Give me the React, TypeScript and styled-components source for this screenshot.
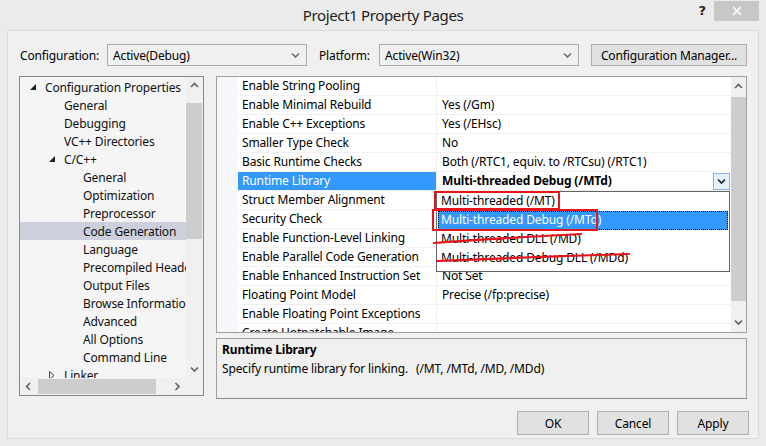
import React from "react";
import styled, { createGlobalStyle } from "styled-components";

const GlobalStyle = createGlobalStyle`
  html, body { margin: 0; padding: 0; background: #ebebeb; }
  * { box-sizing: border-box; }
  body { font-family: "Noto Sans", "Open Sans", sans-serif; font-size: 12px; letter-spacing: -0.14px; color: #000; }
`;

const Window = styled.div`
  position: relative;
  width: 766px;
  height: 446px;
  background: #ebebeb;
  display: flex;
  flex-direction: column;
  overflow: hidden;
`;

const TitleBar = styled.div`
  height: 30px;
  display: grid;
  grid-template-columns: 1fr auto 1fr;
  align-items: start;
`;

const Title = styled.div`
  grid-column: 2;
  font-size: 15px;
  line-height: 30px;
  color: #222;
  letter-spacing: -0.35px;
`;

const TitleControls = styled.div`
  grid-column: 3;
  display: flex;
  justify-content: flex-end;
  align-items: flex-start;
  padding-right: 7px;
  padding-top: 1px;
`;

const HelpGlyph = styled.span`
  font-family: "DejaVu Sans", sans-serif;
  font-weight: bold;
  font-size: 13px;
  line-height: 20px;
  color: #222;
  margin-right: 8px;
`;

const CloseButton = styled.div`
  width: 45px;
  height: 20px;
  background: #c7c7c7;
  display: flex;
  align-items: center;
  justify-content: center;
`;

const Panel = styled.div`
  margin: 0 7px 7px 7px;
  height: 409px;
  background: #f0f0f0;
  border: 1px solid #dcdcdc;
  padding: 13px 11px 0 11px;
  display: flex;
  flex-direction: column;
`;

const TopRow = styled.div`
  height: 22px;
  display: flex;
  align-items: center;
`;

const Label = styled.span<{ $w: number }>`
  flex: none;
  width: ${(p) => p.$w}px;
  padding-left: 1px;
`;

const Combo = styled.div`
  flex: none;
  width: 200px;
  height: 22px;
  border: 1px solid #acacac;
  background: #f0f0f0;
  display: flex;
  align-items: center;
  justify-content: space-between;
  padding: 0 6px 0 5px;
`;

const Spacer = styled.div<{ $w: number }>`
  flex: none;
  width: ${(p) => p.$w}px;
`;

const PushButton = styled.div<{ $w: number; $h: number }>`
  flex: none;
  width: ${(p) => p.$w}px;
  height: ${(p) => p.$h}px;
  border: 1px solid #adadad;
  background: #e1e1e1;
  display: flex;
  align-items: center;
  justify-content: center;
  white-space: nowrap;
  margin-left: auto;
`;

const Body = styled.div`
  margin-top: 10px;
  display: grid;
  grid-template-columns: 185px 1fr;
  column-gap: 12px;
  height: 323px;
`;

const TreeBox = styled.div`
  height: 320px;
  border: 1px solid #828790;
  background: #f5f5f5;
  display: grid;
  grid-template-columns: 1fr 17px;
  grid-template-rows: 1fr 17px;
`;

const TreeList = styled.div`
  overflow: hidden;
  padding-top: 1px;
`;

const TreeRow = styled.div<{ $level: number; $selected?: boolean }>`
  height: 18px;
  display: flex;
  align-items: center;
  padding-left: ${(p) => 10 + p.$level * 19}px;
  background: ${(p) => (p.$selected ? "#cdd0dc" : "transparent")};
  white-space: nowrap;
  color: #111;
`;

const Expander = styled.span`
  width: 15px;
  display: inline-flex;
  align-items: center;
  flex: none;
`;

const VScroll = styled.div`
  position: relative;
  background: #f0f0f0;
  display: flex;
  flex-direction: column;
  justify-content: space-between;
  align-items: center;
  padding: 5px 0;
`;

const Thumb = styled.div`
  position: absolute;
  left: 0;
  right: 1px;
  background: #cdcdcd;
`;

const HScroll = styled.div`
  position: relative;
  background: #f0f0f0;
  display: flex;
  justify-content: space-between;
  align-items: center;
  padding: 0 5px;
`;

const HThumb = styled.div`
  position: absolute;
  top: 1px;
  bottom: 1px;
  background: #cdcdcd;
`;

const Corner = styled.div`
  background: #f0f0f0;
`;

const RightCol = styled.div`
  display: flex;
  flex-direction: column;
  gap: 5px;
`;

const GridFrame = styled.div`
  position: relative;
  height: 257px;
  border: 1px solid #a0a0a0;
  background: #fff;
  display: grid;
  grid-template-columns: 1fr 15px;
`;

const GridList = styled.div`
  overflow: hidden;
`;

const PropRow = styled.div`
  display: grid;
  grid-template-columns: 21px 199px 1fr;
  height: 19px;
`;

const Margin = styled.div`
  background: #f5f7fb;
`;

const NameCell = styled.div<{ $selected?: boolean }>`
  border-bottom: 1px solid #f0f0f0;
  border-right: 1px solid #f0f0f0;
  padding-left: 4px;
  line-height: 18px;
  white-space: nowrap;
  overflow: hidden;
  background: ${(p) => (p.$selected ? "#3399ff" : "#fff")};
  color: ${(p) => (p.$selected ? "#fff" : "#000")};
`;

const ValueCell = styled.div<{ $bold?: boolean }>`
  border-bottom: 1px solid #f0f0f0;
  padding-left: 5px;
  line-height: 18px;
  white-space: nowrap;
  overflow: hidden;
  font-weight: ${(p) => (p.$bold ? 700 : 400)};
  display: flex;
  justify-content: space-between;
  align-items: center;
`;

const DropButton = styled.div`
  width: 17px;
  height: 17px;
  margin-right: 1px;
  border: 1px solid #7eb4ea;
  background: #e5f1fb;
  display: flex;
  align-items: center;
  justify-content: center;
`;

const GridScroll = styled.div`
  position: relative;
  background: #f0f0f0;
  display: flex;
  flex-direction: column;
  justify-content: space-between;
  align-items: center;
  padding: 6px 0 6px 0;
`;

const DropList = styled.div`
  position: absolute;
  left: 219px;
  top: 114px;
  width: 294px;
  height: 81px;
  border: 1px solid #646464;
  background: #fff;
  padding: 0 1px;
`;

const DropItem = styled.div<{ $selected?: boolean }>`
  height: 19px;
  line-height: 18px;
  padding-left: 3px;
  background: ${(p) => (p.$selected ? "#3399ff" : "#fff")};
  color: ${(p) => (p.$selected ? "#fff" : "#000")};
  outline: ${(p) => (p.$selected ? "1px dotted #000" : "none")};
  outline-offset: -1px;
`;

const Description = styled.div`
  height: 61px;
  border: 1px solid #a0a0a0;
  border-bottom-color: #8a8a8a;
  background: #f0f0f0;
  padding: 1px 5px;
  line-height: 19px;
`;

const DescTitle = styled.div`
  font-weight: 700;
`;

const DescText = styled.div`
  display: flex;
  white-space: nowrap;
`;

const DescLead = styled.span`
  flex: none;
  width: 194px;
`;

const ButtonRow = styled.div`
  margin-top: 12px;
  margin-right: -2px;
  display: flex;
  justify-content: flex-end;
  gap: 8px;
  & > * { margin-left: 0; }
`;

const RedBox = styled.div<{ $x: number; $y: number; $w: number; $h: number }>`
  position: absolute;
  left: ${(p) => p.$x}px;
  top: ${(p) => p.$y}px;
  width: ${(p) => p.$w}px;
  height: ${(p) => p.$h}px;
  border: 2px solid #e8141c;
  pointer-events: none;
`;

const Overlay = styled.svg`
  position: absolute;
  left: 0;
  top: 0;
  pointer-events: none;
`;

const Chevron = ({ dir, color = "#606060" }: { dir: "up" | "down" | "left" | "right"; color?: string }) => {
  const pts: Record<string, string> = {
    up: "1,5 4.5,1.5 8,5",
    down: "1,1.5 4.5,5 8,1.5",
    left: "5,1 1.5,4.5 5,8",
    right: "1.5,1 5,4.5 1.5,8",
  };
  const w = dir === "up" || dir === "down" ? 9 : 7;
  const h = dir === "up" || dir === "down" ? 7 : 9;
  return (
    <svg width={w} height={h} viewBox={`0 0 ${w} ${h}`}>
      <polyline points={pts[dir]} fill="none" stroke={color} strokeWidth="1.6" />
    </svg>
  );
};

const Triangle = ({ open }: { open: boolean }) =>
  open ? (
    <svg width="7" height="7" viewBox="0 0 7 7">
      <polygon points="6,0 6,6 0,6" fill="#1e1e1e" />
    </svg>
  ) : (
    <svg width="6" height="9" viewBox="0 0 6 9">
      <polygon points="0.5,0.5 5,4.5 0.5,8.5" fill="none" stroke="#444" strokeWidth="1" />
    </svg>
  );

const treeItems: { label: string; level: number; exp?: "open" | "closed"; selected?: boolean }[] = [
  { label: "Configuration Properties", level: 0, exp: "open" },
  { label: "General", level: 1 },
  { label: "Debugging", level: 1 },
  { label: "VC++ Directories", level: 1 },
  { label: "C/C++", level: 1, exp: "open" },
  { label: "General", level: 2 },
  { label: "Optimization", level: 2 },
  { label: "Preprocessor", level: 2 },
  { label: "Code Generation", level: 2, selected: true },
  { label: "Language", level: 2 },
  { label: "Precompiled Headers", level: 2 },
  { label: "Output Files", level: 2 },
  { label: "Browse Information", level: 2 },
  { label: "Advanced", level: 2 },
  { label: "All Options", level: 2 },
  { label: "Command Line", level: 2 },
  { label: "Linker", level: 1, exp: "closed" },
];

const props: { name: string; value: string; selected?: boolean }[] = [
  { name: "Enable String Pooling", value: "" },
  { name: "Enable Minimal Rebuild", value: "Yes (/Gm)" },
  { name: "Enable C++ Exceptions", value: "Yes (/EHsc)" },
  { name: "Smaller Type Check", value: "No" },
  { name: "Basic Runtime Checks", value: "Both (/RTC1, equiv. to /RTCsu) (/RTC1)" },
  { name: "Runtime Library", value: "Multi-threaded Debug (/MTd)", selected: true },
  { name: "Struct Member Alignment", value: "" },
  { name: "Security Check", value: "" },
  { name: "Enable Function-Level Linking", value: "" },
  { name: "Enable Parallel Code Generation", value: "" },
  { name: "Enable Enhanced Instruction Set", value: "Not Set" },
  { name: "Floating Point Model", value: "Precise (/fp:precise)" },
  { name: "Enable Floating Point Exceptions", value: "" },
  { name: "Create Hotpatchable Image", value: "" },
];

const dropItems = [
  "Multi-threaded (/MT)",
  "Multi-threaded Debug (/MTd)",
  "Multi-threaded DLL (/MD)",
  "Multi-threaded Debug DLL (/MDd)",
];

export default function App() {
  return (
    <>
      <GlobalStyle />
      <Window>
        <TitleBar>
          <Title>Project1 Property Pages</Title>
          <TitleControls>
            <HelpGlyph>?</HelpGlyph>
            <CloseButton>
              <svg width="10" height="10" viewBox="0 0 10 10">
                <path d="M1 1 L9 9 M9 1 L1 9" stroke="#fff" strokeWidth="1.6" />
              </svg>
            </CloseButton>
          </TitleControls>
        </TitleBar>
        <Panel>
          <TopRow>
            <Label $w={88}>Configuration:</Label>
            <Combo>
              <span>Active(Debug)</span>
              <Chevron dir="down" color="#707070" />
            </Combo>
            <Spacer $w={11} />
            <Label $w={61}>Platform:</Label>
            <Combo>
              <span>Active(Win32)</span>
              <Chevron dir="down" color="#707070" />
            </Combo>
            <PushButton $w={156} $h={22}>Configuration Manager...</PushButton>
          </TopRow>
          <Body>
            <TreeBox>
              <TreeList>
                {treeItems.map((t, i) => (
                  <TreeRow key={i} $level={t.level} $selected={t.selected}>
                    <Expander>{t.exp ? <Triangle open={t.exp === "open"} /> : null}</Expander>
                    {t.label}
                  </TreeRow>
                ))}
              </TreeList>
              <VScroll>
                <Chevron dir="up" />
                <Thumb style={{ top: 26, height: 136 }} />
                <Chevron dir="down" />
              </VScroll>
              <HScroll>
                <Chevron dir="left" />
                <HThumb style={{ left: 18, width: 118 }} />
                <Chevron dir="right" />
              </HScroll>
              <Corner />
            </TreeBox>
            <RightCol>
              <GridFrame>
                <GridList>
                  {props.map((p, i) => (
                    <PropRow key={i}>
                      <Margin />
                      <NameCell $selected={p.selected}>{p.name}</NameCell>
                      <ValueCell $bold={p.selected}>
                        <span>{p.value}</span>
                        {p.selected ? (
                          <DropButton>
                            <Chevron dir="down" color="#202020" />
                          </DropButton>
                        ) : null}
                      </ValueCell>
                    </PropRow>
                  ))}
                </GridList>
                <GridScroll>
                  <Chevron dir="up" />
                  <Thumb style={{ top: 20, height: 204, left: 0, right: 0 }} />
                  <Chevron dir="down" />
                </GridScroll>
                <DropList>
                  {dropItems.map((d, i) => (
                    <DropItem key={i} $selected={i === 1}>
                      {d}
                    </DropItem>
                  ))}
                </DropList>
              </GridFrame>
              <Description>
                <DescTitle>Runtime Library</DescTitle>
                <DescText>
                  <DescLead>Specify runtime library for linking.</DescLead>
                  <span>(/MT, /MTd, /MD, /MDd)</span>
                </DescText>
              </Description>
            </RightCol>
          </Body>
          <ButtonRow>
            <PushButton $w={72} $h={24}>OK</PushButton>
            <PushButton $w={72} $h={24}>Cancel</PushButton>
            <PushButton $w={72} $h={24}>Apply</PushButton>
          </ButtonRow>
        </Panel>
        <RedBox $x={434} $y={191} $w={126} $h={19} />
        <RedBox $x={432} $y={209} $w={166} $h={22} />
        <Overlay width="766" height="446" viewBox="0 0 766 446">
          <path d="M434 243 Q 500 238 581 234" fill="none" stroke="#e8141c" strokeWidth="2.2" strokeLinecap="round" />
          <path d="M437 261 Q 530 257 629 254" fill="none" stroke="#e8141c" strokeWidth="2.2" strokeLinecap="round" />
        </Overlay>
      </Window>
    </>
  );
}
